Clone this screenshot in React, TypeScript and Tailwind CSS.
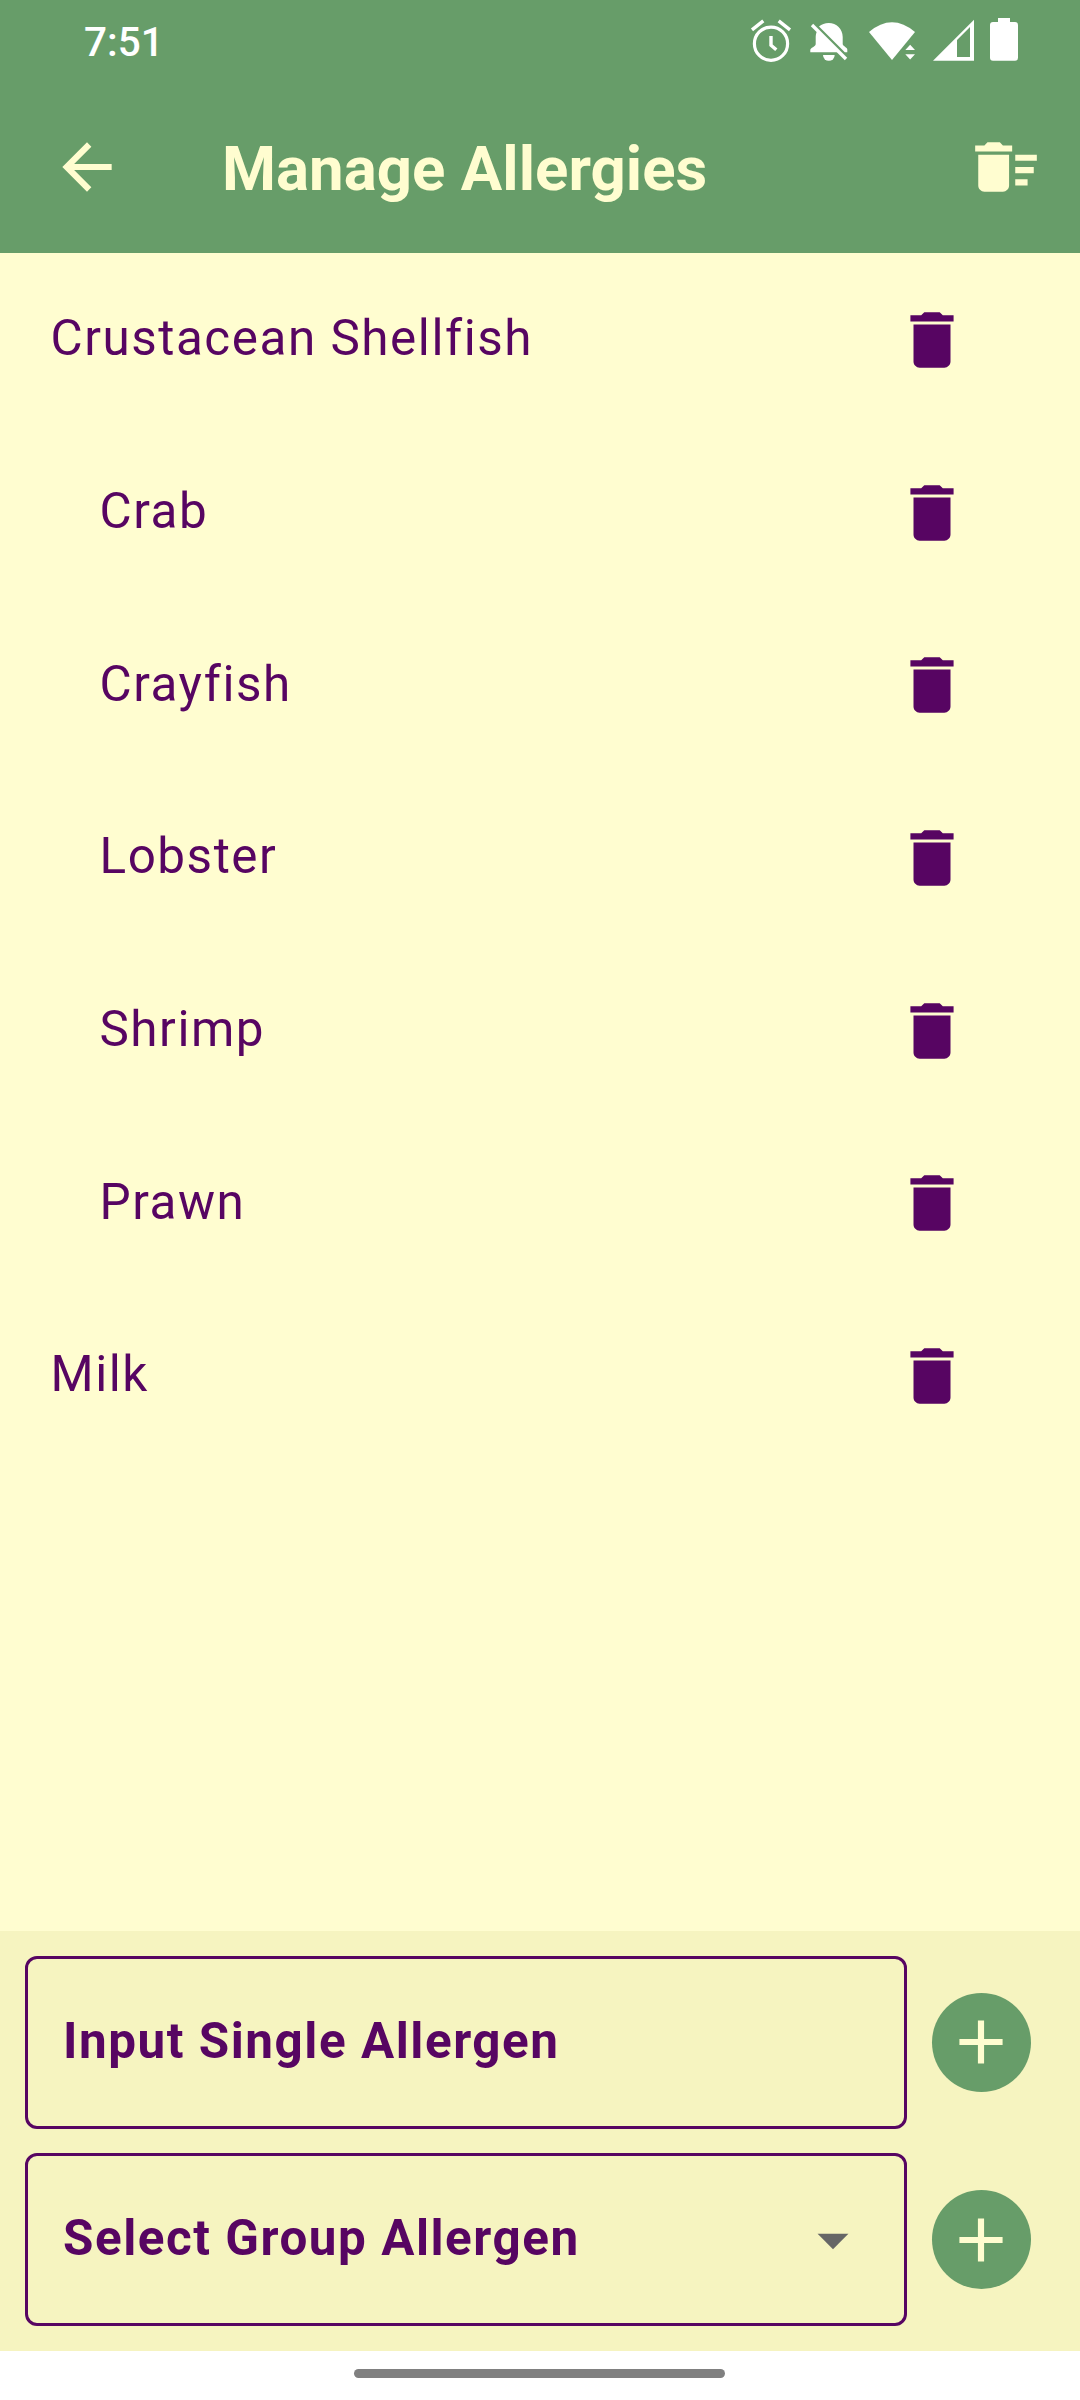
import React from "react";

type IconProps = { d: string; className?: string };

function Icon({ d, className = "" }: IconProps) {
  return (
    <svg viewBox="0 0 24 24" className={`size-[74px] shrink-0 fill-current ${className}`} aria-hidden="true">
      <path d={d} />
    </svg>
  );
}

const ARROW_BACK = "M20 11H7.83l5.59-5.59L12 4l-8 8 8 8 1.41-1.41L7.83 13H20v-2z";
const DELETE_SWEEP =
  "M15 16h4v2h-4zm0-8h7v2h-7zm0 4h6v2h-6zM3 18c0 1.1.9 2 2 2h6c1.1 0 2-.9 2-2V8H3v10zM14 5h-3l-1-1H6L5 5H2v2h12V5z";
const DELETE = "M6 19c0 1.1.9 2 2 2h8c1.1 0 2-.9 2-2V7H6v12zM19 4h-3.5l-1-1h-5l-1 1H5v2h14V4z";
const ADD = "M19 13h-6v6h-2v-6H5v-2h6V5h2v6h6v2z";
const DROP_DOWN = "M7 10l5 5 5-5z";

const allergens = [
  { name: "Crustacean Shellfish", nested: false },
  { name: "Crab", nested: true },
  { name: "Crayfish", nested: true },
  { name: "Lobster", nested: true },
  { name: "Shrimp", nested: true },
  { name: "Prawn", nested: true },
  { name: "Milk", nested: false },
];

function StatusIcons() {
  return (
    <svg viewBox="0 0 280 50" className="h-[50px] w-[280px] fill-white" aria-hidden="true">
      {/* alarm */}
      <g fill="none" stroke="#fff">
        <circle cx="21" cy="28.7" r="16.6" strokeWidth="3.2" />
        <path d="M2 14.8 13.3 5.8M40 14.8 28.7 5.8" strokeWidth="3.4" />
        <path d="M21 21v9.2l5.3 4.6" strokeWidth="3.4" />
      </g>
      {/* muted bell */}
      <path d="M69 11.5Q73 8 78.700 8C86.500 8 92.700 14 92.700 22v7c0 2 4.600 3.500 4.600 5.500v2.800H94.800z" />
      <path d="M67.500 15.500C66 18 65.700 20 65.700 23v6c0 3-5.400 3.500-5.400 6v2.300H89.500z" />
      <path d="M73 40h11.700a5.850 5.850 0 0 1-11.700 0z" />
      <path d="M62 10 96 44" stroke="#fff" strokeWidth="3.4" />
      {/* wifi */}
      <path d="M119 17q23-19.400 46 0L142 45z" />
      <path d="m155.300 35 4.850-5.300L165 35zM155.300 39.300h9.700l-4.850 5.300z" />
      {/* signal */}
      <path fillRule="evenodd" d="M183 45.700 224 4.700v41zM207 25v17h13V12z" />
      {/* battery */}
      <path d="M248 3h12v4h5a3 3 0 0 1 3 3V42.700a3 3 0 0 1-3 3h-22a3 3 0 0 1-3-3V10a3 3 0 0 1 3-3h5z" />
    </svg>
  );
}

function AddButton({ label }: { label: string }) {
  return (
    <button
      aria-label={label}
      className="flex size-[99px] shrink-0 items-center justify-center rounded-full bg-[#679d69] text-[#fffdd0]"
    >
      <Icon d={ADD} className="-ml-px" />
    </button>
  );
}

export default function App() {
  return (
    <div className="flex h-[2400px] w-[1080px] flex-col overflow-hidden bg-[#fffdd0] font-['Roboto',sans-serif] text-[#570562]">
      <header className="h-[253px] shrink-0 bg-[#679d69]">
        <div className="flex h-20 items-center justify-between pr-[50px] pl-[84px] text-white">
          <span className="pt-1 text-[40.5px] leading-[48px] font-medium">7:51</span>
          <StatusIcons />
        </div>
        <div className="flex h-[173px] items-center pr-[37px] pl-[49.500px] text-[#fffdd0]">
          <Icon d={ARROW_BACK} />
          <h1 className="ml-[98.500px] flex-1 pt-1 text-[61.7px] leading-[72px] font-bold tracking-[0.05px]">
            Manage Allergies
          </h1>
          <Icon d={DELETE_SWEEP} />
        </div>
      </header>

      <ul className="min-h-0 flex-1 pt-[0.500px]">
        {allergens.map(({ name, nested }) => (
          <li
            key={name}
            className={`flex h-[172.700px] items-center justify-between pr-[111px] ${nested ? "pl-[99.5px]" : "pl-[50.5px]"}`}
          >
            <span className="pb-[3px] text-[49.4px] leading-[58px] tracking-[1.54px]">{name}</span>
            <Icon d={DELETE} />
          </li>
        ))}
      </ul>

      <section className="flex h-[420px] shrink-0 flex-col gap-[24.700px] bg-[#f6f4c0] py-[24.700px] pr-[49px] pl-[25px]">
        <div className="flex items-center gap-[25px]">
          <div className="flex h-[173px] w-[882px] items-center rounded-xl border-3 border-[#570562] pl-[35px] text-[49.4px] leading-[58px] font-bold tracking-[1.54px]">
            <span className="pb-[3px]">Input Single Allergen</span>
          </div>
          <AddButton label="Add single allergen" />
        </div>
        <div className="flex items-center gap-[25px]">
          <div className="flex h-[173px] w-[882px] items-center justify-between rounded-xl border-3 border-[#570562] pr-[34px] pl-[35px] text-[49.4px] leading-[58px] font-bold tracking-[1.54px]">
            <span className="pb-[3px]">Select Group Allergen</span>
            <Icon d={DROP_DOWN} className="text-[#666666]" />
          </div>
          <AddButton label="Add group allergen" />
        </div>
      </section>

      <footer className="flex h-[49px] shrink-0 justify-center bg-white pt-[18px]">
        <div className="mr-px h-[9px] w-[371px] rounded-full bg-[#808080]" />
      </footer>
    </div>
  );
}
